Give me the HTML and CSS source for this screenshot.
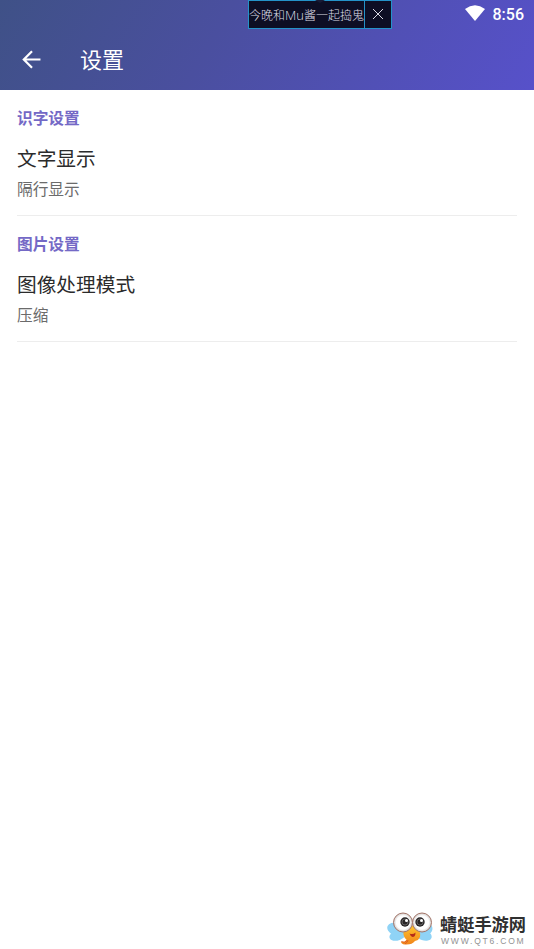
FILE: index.html
```html
<!DOCTYPE html>
<html lang="zh-CN">
<head>
<meta charset="utf-8">
<title>设置</title>
<link rel="stylesheet" href="styles.css">
</head>
<body>
<header class="header">
  <div class="status">
    <svg class="wifi" viewBox="0 0 20 16"><path d="M0 4Q10-3.4 20 4L10 16Z" fill="#fff"/></svg>
    <span class="clock">8:56</span>
  </div>
  <div class="toolbar">
    <svg class="back" viewBox="0 0 18 18"><path d="M17.5 9H2M9.5 1.2L1.7 9l7.8 7.8" fill="none" stroke="#fff" stroke-width="2.1"/></svg>
    <h1 class="title">设置</h1>
  </div>
  <div class="overlay">
    <span class="overlay-text">今晚和<span class="latin">Mu</span>酱一起捣鬼</span>
    <span class="overlay-close"><svg viewBox="0 0 10 10"><path d="M0 0L10 10M10 0L0 10" stroke="#d8d8e4" stroke-width="1"/></svg></span>
    <i class="notch"></i>
  </div>
</header>
<main class="settings">
  <section class="group">
    <h2 class="category">识字设置</h2>
    <div class="name">文字显示</div>
    <div class="value">隔行显示</div>
  </section>
  <section class="group">
    <h2 class="category">图片设置</h2>
    <div class="name">图像处理模式</div>
    <div class="value">压缩</div>
  </section>
</main>
<footer class="brand">
  <svg class="mascot" viewBox="0 0 46 34">
    <defs>
      <radialGradient id="eye"><stop offset=".7" stop-color="#fff"/><stop offset="1" stop-color="#cfcac8"/></radialGradient>
      <linearGradient id="body" x2="0" y2="1"><stop stop-color="#ffc52c"/><stop offset="1" stop-color="#f1841b"/></linearGradient>
    </defs>
    <g fill="#8fd3f6">
      <ellipse cx="8" cy="17" rx="8" ry="6" transform="rotate(22 8 17)"/>
      <ellipse cx="11" cy="23" rx="9" ry="5.2" transform="rotate(-20 11 23)"/>
      <ellipse cx="39" cy="17" rx="6.5" ry="6" transform="rotate(-22 39 17)"/>
      <ellipse cx="36.5" cy="23" rx="8.500" ry="5.2" transform="rotate(20 36.5 23)"/>
    </g>
    <path d="M17 18Q24 9 32 18Q36 27 28 29Q25 33 18 32.500Q14 32 14 29.500Q18 31 19.500 27.500Q15 24 17 18Z" fill="url(#body)"/>
    <path d="M14.500 29.500Q18 31.500 20 28.500M18 32Q21 30 21 28" stroke="#d9541d" stroke-width=".8" fill="none"/>
    <path d="M22.500 21.500Q26 23 28.500 20.500Q28.500 25 25.500 25Q23.500 24.500 22.500 21.500Z" fill="#b52d18"/>
    <g fill="url(#eye)" stroke="#a4766a" stroke-width="1">
      <circle cx="16" cy="10.500" r="9.500"/><circle cx="35" cy="10.500" r="9.500"/>
    </g>
    <g fill="#292627"><circle cx="18" cy="10" r="4.700"/><circle cx="33" cy="10" r="4.700"/></g>
    <g fill="none" stroke="#999" stroke-width=".5"><circle cx="18" cy="10" r="3"/><circle cx="33" cy="10" r="3"/></g>
    <g fill="#fff"><circle cx="19.500" cy="8.500" r="1.500"/><circle cx="34.500" cy="8.500" r="1.500"/></g>
  </svg>
  <div class="brand-copy">
    <div class="brand-name">蜻蜓手游网</div>
    <div class="brand-url">WWW.QT6.COM</div>
  </div>
</footer>
</body>
</html>
```
FILE: styles.css
```css
* { box-sizing: border-box; }
body {
  margin: 0;
  height: 949px;
  display: flex;
  flex-direction: column;
  overflow: hidden;
  background: #fff;
  font-family: "Noto Sans CJK SC", sans-serif;
}
h1, h2 { margin: 0; }
.header {
  position: relative;
  height: 90px;
  flex: none;
  color: #fff;
  background: linear-gradient(120deg, #3f5187 0%, #4a4f9f 40%, #5751ca 100%);
}
.status {
  height: 28px;
  display: flex;
  justify-content: flex-end;
  align-items: center;
  gap: 8px;
  padding-right: 10px;
}
.wifi { width: 20px; height: 16px; margin-bottom: 3px; }
.clock { font: 500 16px/28px Roboto, sans-serif; padding-top: 1px; }
.toolbar { height: 62px; display: flex; align-items: center; padding-left: 22px; }
.back { width: 19px; height: 19px; }
.title { margin: -3px 0 0 39px; font-size: 22px; line-height: 32px; font-weight: 400; }
.overlay {
  position: absolute;
  left: 248px;
  top: 0;
  width: 144px;
  height: 29px;
  display: flex;
  background: #0d0e24;
  border: 1px solid #2492c8;
  color: #dcdce6;
}
.overlay-text {
  width: 116px;
  border-right: 1px solid #2492c8;
  font-size: 12px;
  font-weight: 300;
  line-height: 27px;
  white-space: nowrap;
}
.latin { font-family: "Open Sans", sans-serif; font-size: 13px; line-height: 1; }
.overlay-close { flex: 1; display: flex; align-items: center; justify-content: center; }
.overlay-close svg { width: 10px; height: 10px; margin-top: -1px; }
.notch {
  position: absolute;
  left: 66px;
  top: -1px;
  border: solid transparent;
  border-width: 0 5px;
  border-top: 3px solid #181a35;
}
.settings { padding: 0 17px; flex: 1; }
.group { height: 126px; padding-top: 16px; border-bottom: 1px solid #ededed; }
.category { font-size: 15.700px; line-height: 24px; font-weight: 700; color: #7469c6; }
.name { margin-top: 13px; font-size: 19.700px; line-height: 30px; color: #2b2b2b; }
.value { margin-top: 4px; font-size: 15.700px; line-height: 24px; color: #6b6b6b; }
.brand { display: flex; justify-content: flex-end; height: 38px; padding-right: 8px; }
.mascot { width: 46px; height: 34px; margin: 1px 7px 0 0; }
.brand-copy { width: 86px; white-space: nowrap; }
.brand-name { font-size: 17.200px; line-height: 25px; font-weight: 700; color: #303030; }
.brand-url { font: 8.500px/10px "Liberation Sans", sans-serif; letter-spacing: 1.800px; color: #929292; padding-left: 1px; }
```
